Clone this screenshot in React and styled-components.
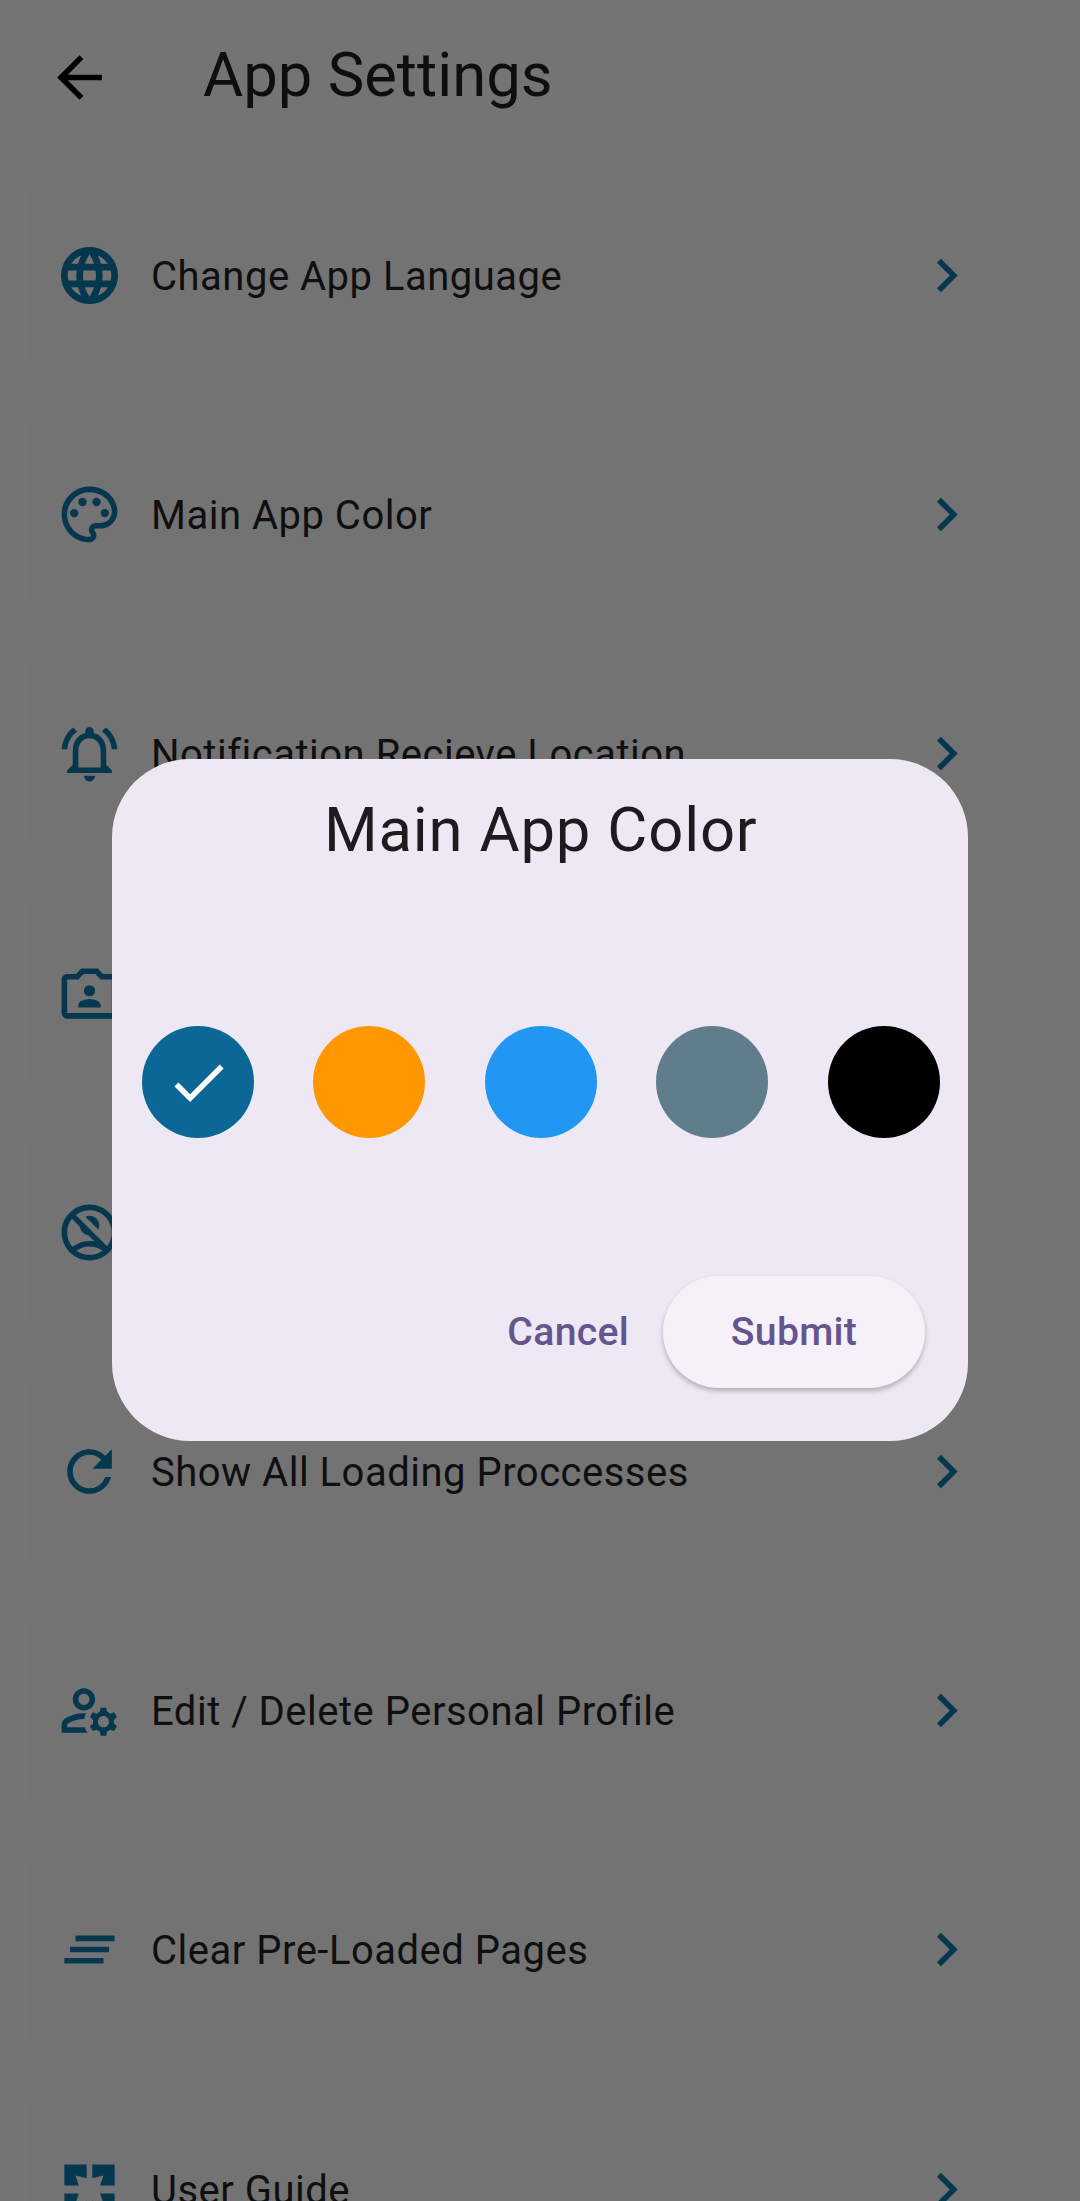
import React from 'react'
import styled, { createGlobalStyle } from 'styled-components'
import {
	MdArrowBack,
	MdChevronRight,
	MdOutlinePalette,
	MdOutlineNotificationsActive,
	MdOutlinePhotoCameraFront,
	MdOutlineNoAccounts,
	MdRefresh,
	MdOutlineManageAccounts,
	MdClearAll,
	MdCheck,
} from 'react-icons/md'

const GlobalStyle = createGlobalStyle`
	html, body {
		margin: 0;
		padding: 0;
		background: #747474;
	}
	body {
		font-family: Roboto, "Noto Sans", sans-serif;
	}
`

const Screen = styled.div`
	position: relative;
	width: 1080px;
	height: 2201px;
	overflow: hidden;
	background: #747474;
`

const AppBar = styled.header`
	display: flex;
	align-items: center;
	height: 154px;
	padding-left: 46px;
`

const BackIcon = styled(MdArrowBack)`
	flex: none;
	width: 67px;
	height: 67px;
	color: #000;
`

const Title = styled.h1`
	margin: 0 0 5px 90px;
	font-size: 61.6px;
	font-weight: 400;
	color: #0e0e0f;
`

const List = styled.div`
	display: flex;
	flex-direction: column;
	gap: 57.2px;
	margin: 30.5px 30px 0 28px;
`

const Row = styled.div`
	display: flex;
	align-items: center;
	flex: none;
	height: 182px;
	padding-left: 28px;
	background: #737374;
	color: #05374f;
`

const Label = styled.span`
	flex: 1;
	margin-left: 28px;
	padding-top: 2px;
	font-size: 40px;
	letter-spacing: 0.5px;
	color: #0f0f10;
	white-space: nowrap;
`

const Chevron = styled(MdChevronRight)`
	flex: none;
	width: 67px;
	height: 67px;
	margin-right: 70px;
	color: #05374f;
`

const GlobeIcon = () => (
	<svg width="67" height="67" viewBox="0 0 24 24" fill="currentColor" stroke="currentColor" strokeWidth="0.4">
		<path d="M11.99 2C6.47 2 2 6.48 2 12s4.47 10 9.99 10C17.52 22 22 17.52 22 12S17.52 2 11.99 2zm6.93 6h-2.95a15.65 15.65 0 00-1.38-3.56A8.03 8.03 0 0118.92 8zM12 4.04c.83 1.2 1.48 2.53 1.91 3.96h-3.82c.43-1.43 1.08-2.76 1.91-3.96zM4.26 14C4.1 13.36 4 12.69 4 12s.1-1.36.26-2h3.38c-.08.66-.14 1.32-.14 2 0 .68.06 1.34.14 2H4.26zm.82 2h2.95c.32 1.25.78 2.45 1.38 3.56A7.987 7.987 0 015.08 16zm2.95-8H5.08a7.987 7.987 0 014.33-3.56A15.65 15.65 0 008.03 8zM12 19.96c-.83-1.2-1.48-2.53-1.91-3.96h3.82c-.43 1.43-1.08 2.76-1.91 3.96zM14.34 14H9.66c-.09-.66-.16-1.32-.16-2 0-.68.07-1.35.16-2h4.68c.09.65.16 1.32.16 2 0 .68-.07 1.34-.16 2zm.25 5.56c.6-1.11 1.06-2.31 1.38-3.56h2.95a8.03 8.03 0 01-4.33 3.56zM16.36 14c.08-.66.14-1.32.14-2 0-.68-.06-1.34-.14-2h3.38c.16.64.26 1.31.26 2s-.1 1.36-.26 2h-3.38z" />
	</svg>
)

const GuideIcon = () => (
	<svg width="67" height="67" viewBox="0 0 24 24" fill="currentColor">
		<path d="M3 3H11V8L7 7L8.2 10.6H3ZM21 3H13V8L17 7L15.8 10.6H21ZM3 21H11V16L7 17L8.2 13.4H3ZM21 21H13V16L17 17L15.8 13.4H21Z" />
	</svg>
)

const Dialog = styled.div`
	position: absolute;
	left: 112px;
	top: 759px;
	width: 856px;
	height: 682px;
	box-sizing: border-box;
	display: flex;
	flex-direction: column;
	padding: 29px 28.5px 53px 30px;
	border-radius: 78px;
	background: #eee8f4;
`

const DialogTitle = styled.h2`
	margin: 0;
	text-align: center;
	font-size: 61.6px;
	line-height: 84px;
	font-weight: 400;
	letter-spacing: 0.8px;
	color: #1d1b20;
`

const Swatches = styled.div`
	display: flex;
	justify-content: space-between;
	margin-top: 154px;
`

const Swatch = styled.div`
	display: flex;
	align-items: center;
	justify-content: center;
	width: 112px;
	height: 112px;
	border-radius: 50%;
	background: ${(p) => p.$color};
	color: #fff;
	font-size: 67px;
`

const Actions = styled.div`
	display: flex;
	justify-content: flex-end;
	align-items: center;
	margin-top: auto;
	padding-right: 14.5px;
`

const TextButton = styled.button`
	border: none;
	background: none;
	padding: 0;
	height: 112px;
	margin-right: 34px;
	font-family: Roboto, sans-serif;
	font-size: 39.2px;
	font-weight: 500;
	letter-spacing: 0.28px;
	color: #65558f;
`

const RaisedButton = styled(TextButton)`
	width: 262px;
	margin-right: 0;
	border-radius: 56px;
	background: #f6f1f9;
	box-shadow: 0 3px 5px rgba(0, 0, 0, 0.25);
`

const rows = [
	{ icon: GlobeIcon, label: 'Change App Language' },
	{ icon: MdOutlinePalette, label: 'Main App Color' },
	{ icon: MdOutlineNotificationsActive, label: 'Notification Recieve Location' },
	{ icon: MdOutlinePhotoCameraFront, label: '' },
	{ icon: MdOutlineNoAccounts, label: '' },
	{ icon: MdRefresh, label: 'Show All Loading Proccesses' },
	{ icon: MdOutlineManageAccounts, label: 'Edit / Delete Personal Profile' },
	{ icon: MdClearAll, label: 'Clear Pre-Loaded Pages' },
	{ icon: GuideIcon, label: 'User Guide' },
]

const colors = ['#0a6796', '#ff9800', '#2196f3', '#607d8b', '#000000']

const App = () => {
	return (
		<Screen>
			<GlobalStyle />
			<AppBar>
				<BackIcon />
				<Title>App Settings</Title>
			</AppBar>
			<List>
				{rows.map((row, i) => (
					<Row key={i}>
						<row.icon size={67} />
						<Label>{row.label}</Label>
						<Chevron />
					</Row>
				))}
			</List>
			<Dialog>
				<DialogTitle>Main App Color</DialogTitle>
				<Swatches>
					{colors.map((color, i) => (
						<Swatch key={color} $color={color}>
							{i === 0 && <MdCheck />}
						</Swatch>
					))}
				</Swatches>
				<Actions>
					<TextButton>Cancel</TextButton>
					<RaisedButton>Submit</RaisedButton>
				</Actions>
			</Dialog>
		</Screen>
	)
}

export default App
